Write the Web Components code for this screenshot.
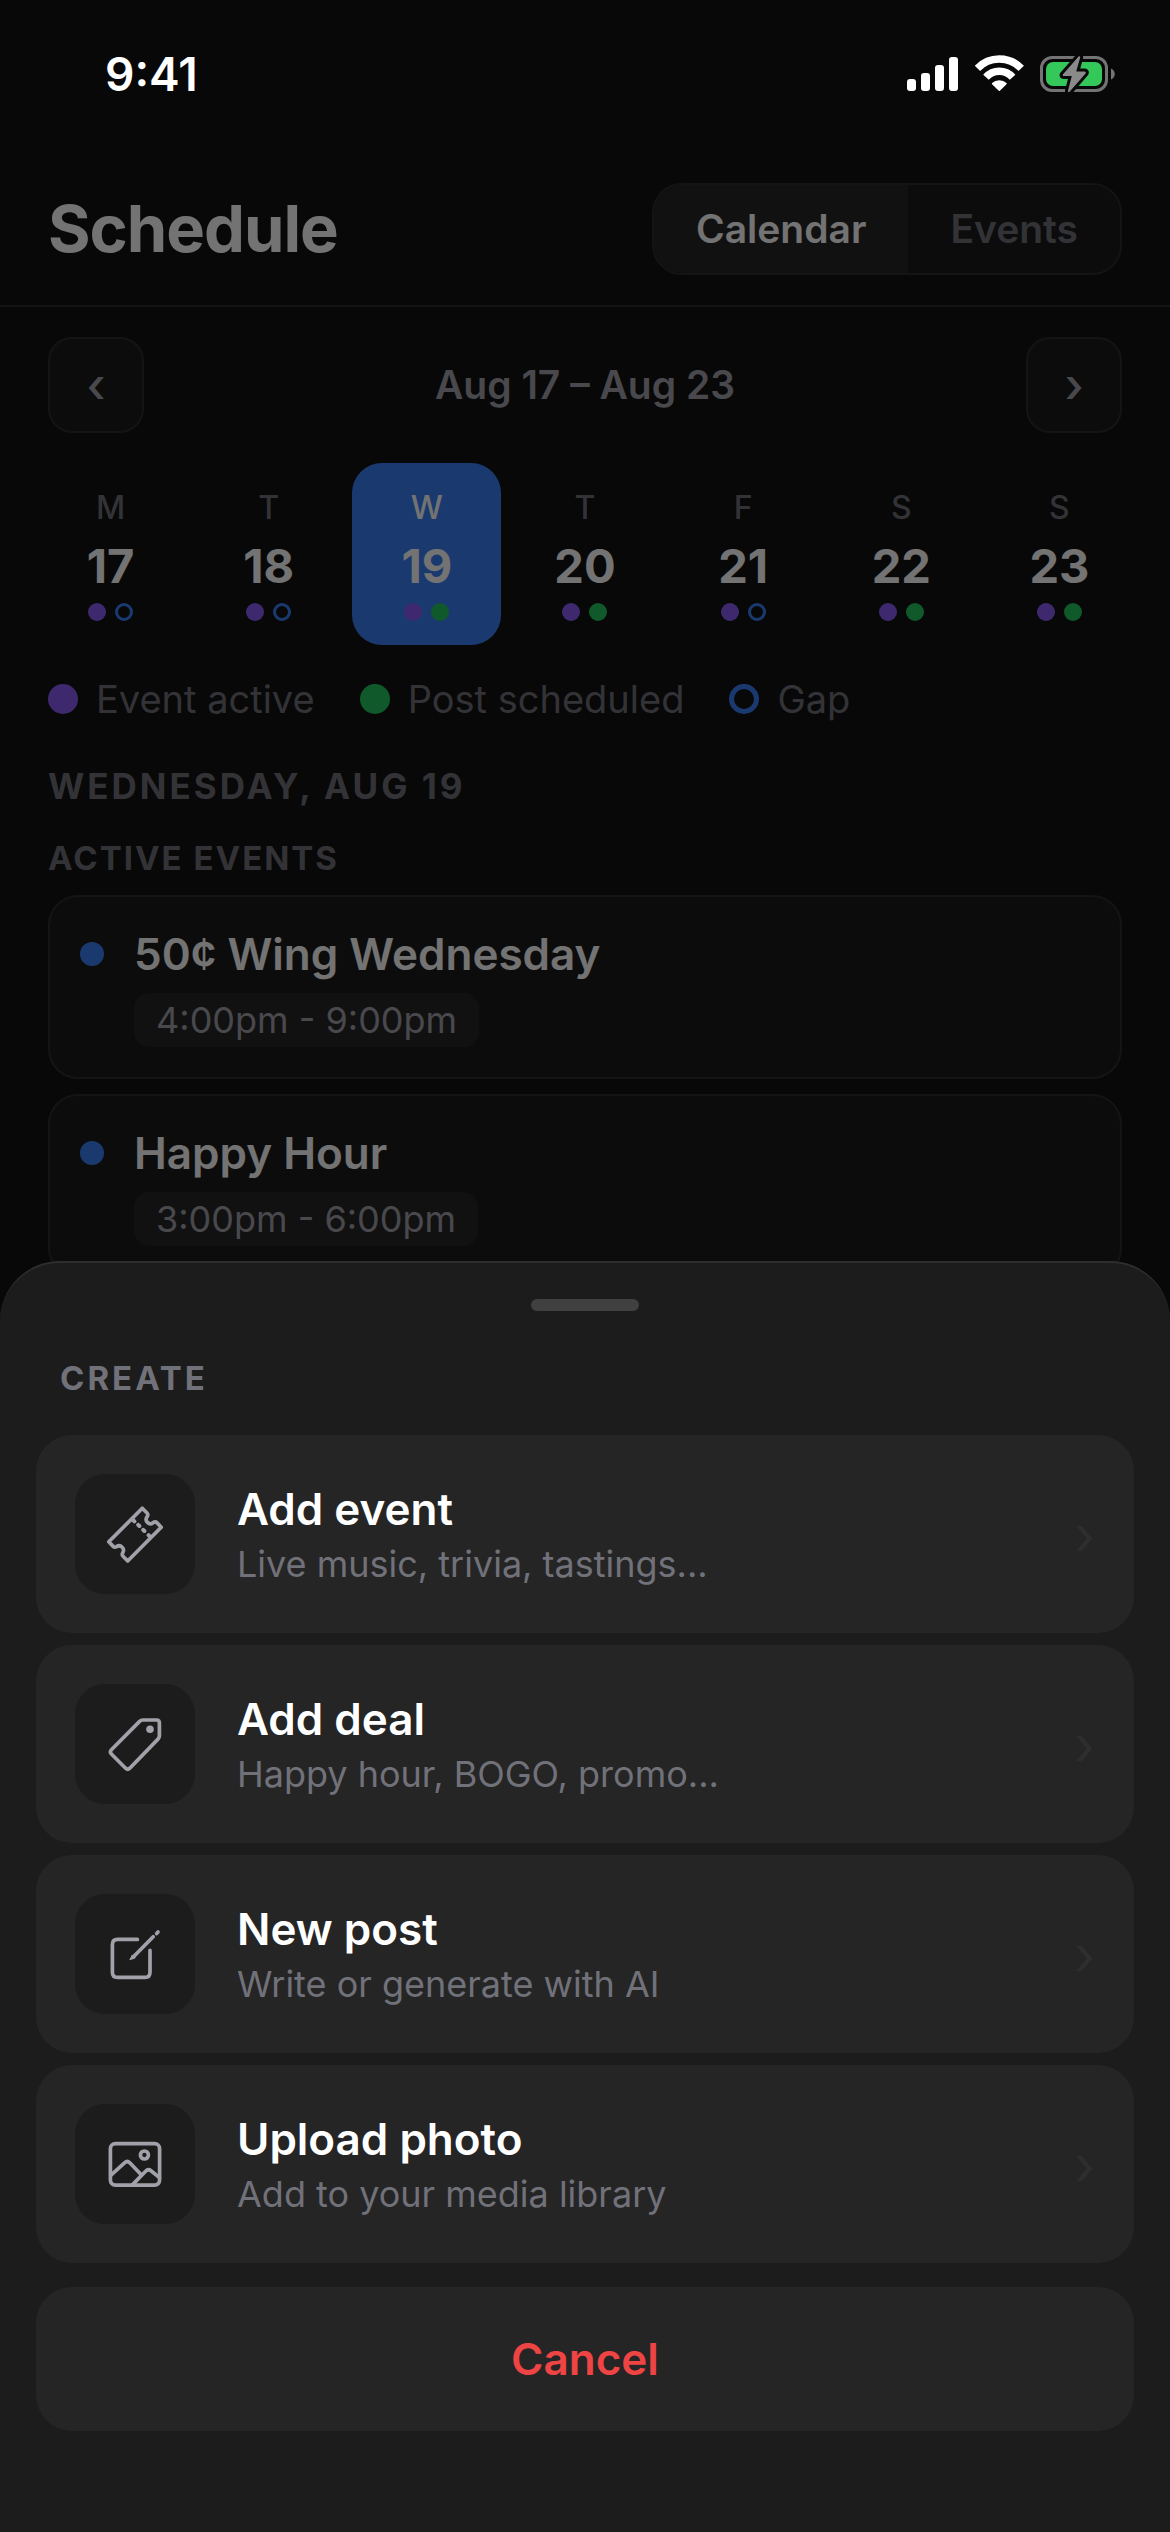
<!DOCTYPE html>
<html lang="en">
<head>
<meta charset="UTF-8">
<meta name="viewport" content="width=device-width, initial-scale=1">
<title>Schedule</title>
<style>
    :root {
        --bg: #121212;
        --surface: #1c1c1c;
        --raised: #262626;
        --line: #2e2e2e;
        --text: #ffffff;
        --text-soft: #a1a1aa;
        --text-muted: #71717a;
        --blue: #3b82f6;
        --violet: #8b5cf6;
        --green: #22c55e;
        --red: #ef4444;
    }
    body {
        margin: 0;
        background: var(--bg);
        color: var(--text);
        font-family: Inter, "Liberation Sans", sans-serif;
    }
</style>
</head>
<body>

<app-shell>
    <status-bar slot="status" time="9:41"></status-bar>

    <page-header heading="Schedule">
        <segmented-control options="Calendar,Events" selected="Calendar"></segmented-control>
    </page-header>

    <week-nav>Aug 17 – Aug 23</week-nav>

    <week-strip>
        <day-cell day="M" date="17" dots="event,gap"></day-cell>
        <day-cell day="T" date="18" dots="event,gap"></day-cell>
        <day-cell day="W" date="19" dots="event,post" selected></day-cell>
        <day-cell day="T" date="20" dots="event,post"></day-cell>
        <day-cell day="F" date="21" dots="event,gap"></day-cell>
        <day-cell day="S" date="22" dots="event,post"></day-cell>
        <day-cell day="S" date="23" dots="event,post"></day-cell>
    </week-strip>

    <dot-legend></dot-legend>

    <event-list day="Wednesday, Aug 19" heading="Active events">
        <event-card time="4:00pm - 9:00pm">50¢ Wing Wednesday</event-card>
        <event-card time="3:00pm - 6:00pm">Happy Hour</event-card>
    </event-list>

    <bottom-sheet slot="sheet" heading="Create">
        <sheet-action icon="ticket" hint="Live music, trivia, tastings...">Add event</sheet-action>
        <sheet-action icon="tag" hint="Happy hour, BOGO, promo...">Add deal</sheet-action>
        <sheet-action icon="compose" hint="Write or generate with AI">New post</sheet-action>
        <sheet-action icon="photo" hint="Add to your media library">Upload photo</sheet-action>
    </bottom-sheet>
</app-shell>

<script>
// Page frame: scrolling content, dimmed backdrop, status bar and sheet on top
class AppShell extends HTMLElement {
    constructor() {
        super();
        this.attachShadow({ mode: "open" });
        this.shadowRoot.innerHTML = `
            <style>
                :host {
                    display: block;
                    position: relative;
                    height: 100vh;
                    overflow: hidden;
                }
                main {
                    padding-top: 141px;
                }
                .backdrop {
                    position: absolute;
                    inset: 0;
                    background: rgba(0, 0, 0, 0.55);
                }
                .status {
                    position: absolute;
                    inset: 0 0 auto;
                }
                .sheet {
                    position: absolute;
                    inset: auto 0 0;
                }
            </style>
            <main><slot></slot></main>
            <div class="backdrop"></div>
            <div class="status"><slot name="status"></slot></div>
            <div class="sheet"><slot name="sheet"></slot></div>
        `;
    }
}

class StatusBar extends HTMLElement {
    constructor() {
        super();
        this.attachShadow({ mode: "open" });
        this.shadowRoot.innerHTML = `
            <style>
                :host {
                    display: flex;
                    justify-content: space-between;
                    align-items: center;
                    padding: 46px 54px 0 105px;
                }
                time {
                    font-size: 46px;
                    line-height: 56px;
                    font-weight: 600;
                }
                .icons {
                    display: flex;
                    align-items: center;
                    gap: 16px;
                }
                svg {
                    display: block;
                }
            </style>
            <time>${this.getAttribute("time")}</time>
            <div class="icons">
                <svg width="52" height="38" viewBox="0 0 52 38" fill="#fff" aria-label="Signal">
                    <rect x="0" y="24" width="9" height="12" rx="3"/>
                    <rect x="14" y="18" width="9" height="18" rx="3"/>
                    <rect x="28" y="10" width="9" height="26" rx="3"/>
                    <rect x="42" y="2" width="9" height="34" rx="3"/>
                </svg>
                <svg width="49" height="38" viewBox="0 0 49 38" fill="none" stroke="#fff" stroke-width="7.5" aria-label="Wi-Fi">
                    <path d="M2.4 13.4A30.2 30.2 0 0 1 46.2 13.4"/>
                    <path d="M11 22.3A17.8 17.8 0 0 1 37.6 22.3"/>
                    <path d="M24.3 35.2L17.6 28.6A9.6 9.6 0 0 1 31 28.6Z" fill="#fff" stroke-width="1.5" stroke-linejoin="round"/>
                </svg>
                <svg width="76" height="38" viewBox="0 0 76 38" aria-label="Battery charging">
                    <rect x="1.5" y="2.5" width="65" height="33" rx="10.5" fill="none" stroke="#747474" stroke-width="3"/>
                    <rect x="6" y="7" width="56" height="24" rx="7" fill="#34c759"/>
                    <path d="M71 13.5C76 15.5 76 22.5 71 24.5Z" fill="#747474"/>
                    <path d="M38.6 1.5L22.8 19.4Q22 21 23.8 21H31.8L28 35.8Q28 38 29.8 36.6L45.6 18.4Q46.4 16.6 44.6 16.6H36.2L40.2 2.6Q40.2 0.4 38.6 1.5Z" fill="#8a8a8a" stroke="#080808" stroke-width="6" stroke-linejoin="round" paint-order="stroke"/>
                </svg>
            </div>
        `;
    }
}

class PageHeader extends HTMLElement {
    constructor() {
        super();
        this.attachShadow({ mode: "open" });
        this.shadowRoot.innerHTML = `
            <style>
                :host {
                    display: block;
                }
                header {
                    display: flex;
                    justify-content: space-between;
                    align-items: center;
                    padding: 42px 48px 30px;
                    border-bottom: 2px solid var(--line);
                }
                h1 {
                    margin: 0;
                    font-size: 65px;
                    line-height: 78px;
                    font-weight: 700;
                    letter-spacing: -1px;
                }
            </style>
            <header>
                <h1>${this.getAttribute("heading")}</h1>
                <slot></slot>
            </header>
        `;
    }
}

class SegmentedControl extends HTMLElement {
    constructor() {
        super();
        this.attachShadow({ mode: "open" });
        const selected = this.getAttribute("selected");
        const buttons = this.getAttribute("options").split(",").map(option => `
            <button type="button" aria-pressed="${option === selected}">${option}</button>
        `).join("");

        this.shadowRoot.innerHTML = `
            <style>
                :host {
                    display: flex;
                    border: 2px solid var(--line);
                    border-radius: 30px;
                    overflow: hidden;
                }
                button {
                    border: 0;
                    padding: 20px 42px;
                    background: var(--surface);
                    color: var(--text-muted);
                    font: 600 39px/48px Inter, "Liberation Sans", sans-serif;
                }
                button[aria-pressed="true"] {
                    background: var(--raised);
                    color: var(--text);
                }
            </style>
            ${buttons}
        `;
    }
}

class WeekNav extends HTMLElement {
    constructor() {
        super();
        this.attachShadow({ mode: "open" });
        this.shadowRoot.innerHTML = `
            <style>
                :host {
                    display: flex;
                    justify-content: space-between;
                    align-items: center;
                    padding: 30px 48px;
                    color: var(--text-soft);
                    font-size: 39px;
                    line-height: 48px;
                    font-weight: 600;
                }
                button {
                    width: 96px;
                    height: 96px;
                    padding: 0;
                    border: 2px solid var(--line);
                    border-radius: 24px;
                    background: var(--surface);
                    color: inherit;
                    font: 500 48px/60px Inter, "Liberation Sans", sans-serif;
                }
            </style>
            <button type="button" aria-label="Previous week">‹</button>
            <slot></slot>
            <button type="button" aria-label="Next week">›</button>
        `;
    }
}

class WeekStrip extends HTMLElement {
    constructor() {
        super();
        this.attachShadow({ mode: "open" });
        this.shadowRoot.innerHTML = `
            <style>
                :host {
                    display: grid;
                    grid-template-columns: repeat(7, 1fr);
                    gap: 9px;
                    padding: 0 36px;
                }
            </style>
            <slot></slot>
        `;
    }
}

class DayCell extends HTMLElement {
    constructor() {
        super();
        this.attachShadow({ mode: "open" });
        const dots = this.getAttribute("dots").split(",").map(kind => `<i class="${kind}"></i>`).join("");

        this.shadowRoot.innerHTML = `
            <style>
                :host {
                    display: block;
                }
                button {
                    display: flex;
                    flex-direction: column;
                    align-items: center;
                    width: 100%;
                    padding: 24px 0;
                    border: 0;
                    border-radius: 30px;
                    background: none;
                    color: var(--text);
                    font-family: inherit;
                }
                :host([selected]) button {
                    background: var(--blue);
                }
                .day {
                    color: var(--text-muted);
                    font-size: 32px;
                    line-height: 42px;
                    font-weight: 500;
                }
                :host([selected]) .day {
                    color: var(--text);
                }
                .date {
                    margin: 7px 0;
                    font-size: 47px;
                    line-height: 60px;
                    font-weight: 700;
                }
                .dots {
                    display: flex;
                    gap: 9px;
                }
                i {
                    box-sizing: border-box;
                    width: 18px;
                    height: 18px;
                    border-radius: 50%;
                }
                .event { background: var(--violet); }
                .post { background: var(--green); }
                .gap { border: 3px solid var(--blue); }
            </style>
            <button type="button">
                <span class="day">${this.getAttribute("day")}</span>
                <span class="date">${this.getAttribute("date")}</span>
                <span class="dots">${dots}</span>
            </button>
        `;
    }
}

class DotLegend extends HTMLElement {
    constructor() {
        super();
        this.attachShadow({ mode: "open" });
        this.shadowRoot.innerHTML = `
            <style>
                :host {
                    display: flex;
                    gap: 45px;
                    padding: 30px 48px 0;
                    color: var(--text-muted);
                    font-size: 38px;
                    line-height: 48px;
                }
                span {
                    display: flex;
                    align-items: center;
                    gap: 18px;
                }
                i {
                    box-sizing: border-box;
                    width: 30px;
                    height: 30px;
                    border-radius: 50%;
                }
                .event { background: var(--violet); }
                .post { background: var(--green); }
                .gap { border: 5px solid var(--blue); }
            </style>
            <span><i class="event"></i>Event active</span>
            <span><i class="post"></i>Post scheduled</span>
            <span><i class="gap"></i>Gap</span>
        `;
    }
}

class EventList extends HTMLElement {
    constructor() {
        super();
        this.attachShadow({ mode: "open" });
        this.shadowRoot.innerHTML = `
            <style>
                :host {
                    display: flex;
                    flex-direction: column;
                    gap: 15px;
                    padding: 42px 48px 0;
                }
                h2, h3 {
                    margin: 0;
                    color: var(--text-muted);
                    font-weight: 700;
                    text-transform: uppercase;
                }
                h2 {
                    margin-bottom: 14px;
                    font-size: 35px;
                    line-height: 42px;
                    letter-spacing: 3px;
                }
                h3 {
                    font-size: 33px;
                    line-height: 44px;
                    letter-spacing: 2px;
                }
            </style>
            <h2>${this.getAttribute("day")}</h2>
            <h3>${this.getAttribute("heading")}</h3>
            <slot></slot>
        `;
    }
}

class EventCard extends HTMLElement {
    constructor() {
        super();
        this.attachShadow({ mode: "open" });
        this.shadowRoot.innerHTML = `
            <style>
                :host {
                    display: flex;
                    gap: 30px;
                    padding: 30px;
                    border: 2px solid var(--line);
                    border-radius: 30px;
                    background: var(--surface);
                }
                i {
                    width: 24px;
                    height: 24px;
                    margin-top: 15px;
                    border-radius: 50%;
                    background: var(--blue);
                }
                .body {
                    display: flex;
                    flex-direction: column;
                    align-items: flex-start;
                    gap: 12px;
                }
                .title {
                    font-size: 44px;
                    line-height: 54px;
                    font-weight: 600;
                }
                time {
                    padding: 6px 22px;
                    border-radius: 15px;
                    background: var(--raised);
                    color: var(--text-soft);
                    font-size: 36px;
                    line-height: 42px;
                }
            </style>
            <i></i>
            <div class="body">
                <div class="title"><slot></slot></div>
                <time>${this.getAttribute("time")}</time>
            </div>
        `;
    }
}

class BottomSheet extends HTMLElement {
    constructor() {
        super();
        this.attachShadow({ mode: "open" });
        this.shadowRoot.innerHTML = `
            <style>
                :host {
                    display: flex;
                    flex-direction: column;
                    padding: 36px 36px 101px;
                    border-top: 2px solid var(--line);
                    border-radius: 60px 60px 0 0;
                    background: var(--surface);
                }
                .handle {
                    align-self: center;
                    width: 108px;
                    height: 12px;
                    border-radius: 6px;
                    background: #404040;
                }
                h2 {
                    margin: 46px 24px 36px;
                    color: var(--text-muted);
                    font-size: 33px;
                    line-height: 42px;
                    font-weight: 700;
                    text-transform: uppercase;
                    letter-spacing: 3px;
                }
                .actions {
                    display: flex;
                    flex-direction: column;
                    gap: 12px;
                }
                .cancel {
                    margin-top: 24px;
                    padding: 45px 0;
                    border: 0;
                    border-radius: 36px;
                    background: #252525;
                    color: var(--red);
                    font: 600 44px/54px Inter, "Liberation Sans", sans-serif;
                }
            </style>
            <div class="handle"></div>
            <h2>${this.getAttribute("heading")}</h2>
            <div class="actions"><slot></slot></div>
            <button type="button" class="cancel">Cancel</button>
        `;
    }
}

const actionIcons = {
    ticket: `
        <path d="M67.3 34.3L72 39C73.2 40.2 73 41.4 72 42.8C70.6 45 71 47 72.4 48.4C74 50 76.2 50.2 78 48.8C79.4 47.8 80.6 47.4 81.8 48.6L86.2 53.2L52.7 87L48 82.2C46.8 81 47 80 47.8 78.6C49 76.4 48.6 74.6 47.2 73.2C45.6 71.6 43.4 71.4 41.6 72.6C40.2 73.4 39.2 73.4 38.2 72.4L33.8 67.8Z"/>
        <path d="M58 46L59.4 47.4M63.2 50.8L64.4 52M68.2 55.8L69.4 57M73.6 61.2L75 62.6" stroke-width="4"/>
    `,
    tag: `
        <path d="M68 36H81.5Q84.4 36 84.4 38.9V51.8Q84.4 53.7 83 55.1L54.8 84.2Q52.7 86.2 50.6 84.2L36.4 70Q34.3 67.9 36.4 65.8L64.6 37.4Q66 36 68 36Z"/>
        <circle cx="75" cy="45.3" r="3.8" fill="#a1a1aa" stroke="none"/>
    `,
    compose: `
        <path d="M62.4 45.4H42.6Q37.4 45.4 37.4 50.6V78.2Q37.4 83.4 42.6 83.4H69.8Q75 83.4 75 78.2V56.4"/>
        <path d="M58 63.2L78.2 42.8M81.6 39.6L83 38"/>
        <path d="M57.6 61.2L60.2 63.8L55.2 65.6Z" fill="#a1a1aa" stroke-width="1"/>
    `,
    photo: `
        <rect x="35.4" y="39.7" width="49.2" height="41.4" rx="5"/>
        <circle cx="69.4" cy="51" r="4"/>
        <path d="M36 71.2L49.8 58.6Q52.3 56.4 54.8 58.8L66 70.6M57.6 80.6L70.6 67.2Q73.2 64.6 76 66.8L84.4 73.6"/>
    `
};

class SheetAction extends HTMLElement {
    constructor() {
        super();
        this.attachShadow({ mode: "open" });
        this.shadowRoot.innerHTML = `
            <style>
                :host {
                    display: block;
                }
                button {
                    display: flex;
                    align-items: center;
                    gap: 42px;
                    width: 100%;
                    padding: 39px;
                    border: 0;
                    border-radius: 36px;
                    background: #252525;
                    color: var(--text);
                    font-family: inherit;
                    text-align: left;
                }
                svg {
                    flex: none;
                    width: 120px;
                    height: 120px;
                    border-radius: 30px;
                    background: var(--surface);
                }
                .text {
                    display: flex;
                    flex: 1;
                    flex-direction: column;
                    gap: 6px;
                }
                .title {
                    font-size: 44px;
                    line-height: 54px;
                    font-weight: 600;
                }
                .hint {
                    color: var(--text-muted);
                    font-size: 36px;
                    line-height: 44px;
                }
                .chevron {
                    padding-top: 4px;
                    color: var(--line);
                    font-size: 54px;
                    line-height: 66px;
                }
            </style>
            <button type="button">
                <svg viewBox="0 0 120 120" fill="none" stroke="#a1a1aa" stroke-width="3.7" stroke-linecap="round" stroke-linejoin="round" aria-hidden="true">${actionIcons[this.getAttribute("icon")]}</svg>
                <span class="text">
                    <span class="title"><slot></slot></span>
                    <span class="hint">${this.getAttribute("hint")}</span>
                </span>
                <span class="chevron" aria-hidden="true">›</span>
            </button>
        `;
    }
}

customElements.define("app-shell", AppShell);
customElements.define("status-bar", StatusBar);
customElements.define("page-header", PageHeader);
customElements.define("segmented-control", SegmentedControl);
customElements.define("week-nav", WeekNav);
customElements.define("week-strip", WeekStrip);
customElements.define("day-cell", DayCell);
customElements.define("dot-legend", DotLegend);
customElements.define("event-list", EventList);
customElements.define("event-card", EventCard);
customElements.define("bottom-sheet", BottomSheet);
customElements.define("sheet-action", SheetAction);
</script>
</body>
</html>
